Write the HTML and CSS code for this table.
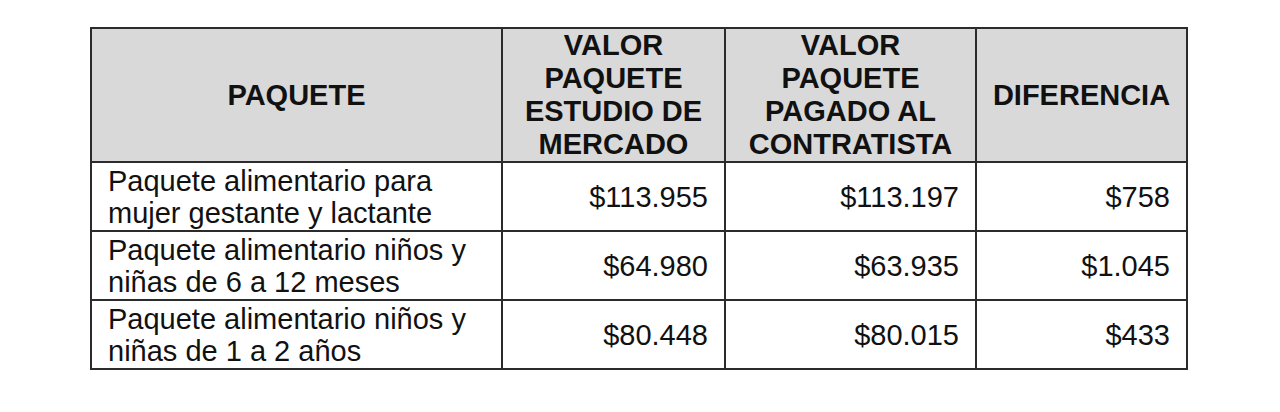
FILE: index.html
```html
<!DOCTYPE html>
<html lang="es">
<head>
<meta charset="utf-8">
<link rel="stylesheet" href="styles.css">
</head>
<body>
<div class="page">
<table class="tbl">
<colgroup>
<col class="c1"><col class="c2"><col class="c3"><col class="c4">
</colgroup>
<thead>
<tr>
<th>PAQUETE</th>
<th>VALOR<br>PAQUETE<br>ESTUDIO DE<br>MERCADO</th>
<th>VALOR<br>PAQUETE<br>PAGADO AL<br>CONTRATISTA</th>
<th>DIFERENCIA</th>
</tr>
</thead>
<tbody>
<tr>
<td class="name">Paquete alimentario para<br>mujer gestante y lactante</td>
<td class="num">$113.955</td>
<td class="num">$113.197</td>
<td class="num">$758</td>
</tr>
<tr>
<td class="name">Paquete alimentario niños y<br>niñas de 6 a 12 meses</td>
<td class="num">$64.980</td>
<td class="num">$63.935</td>
<td class="num">$1.045</td>
</tr>
<tr>
<td class="name">Paquete alimentario niños y<br>niñas de 1 a 2 años</td>
<td class="num">$80.448</td>
<td class="num">$80.015</td>
<td class="num">$433</td>
</tr>
</tbody>
</table>
</div>
</body>
</html>
```

FILE: styles.css
```css
html, body {
  margin: 0;
  padding: 0;
  background: #ffffff;
}
.page {
  padding: 27px 0 0 90px;
}
.tbl {
  border-collapse: collapse;
  table-layout: fixed;
  width: 1096px;
  font-family: "Liberation Sans", Arial, sans-serif;
  color: #111111;
}
.c1 { width: 411px; }
.c2 { width: 223px; }
.c3 { width: 251px; }
.c4 { width: 211px; }
.tbl th,
.tbl td {
  border: 2px solid #2b2b2b;
}
.tbl th {
  background: #d9d9d9;
  font-size: 29px;
  font-weight: bold;
  line-height: 33px;
  padding: 0 2px;
  text-align: center;
  vertical-align: middle;
  height: 131px;
}
.tbl td {
  font-size: 29px;
  line-height: 32px;
  padding: 2px 16px 1px 16px;
  vertical-align: middle;
  height: 64px;
}
.tbl td.name {
  text-align: left;
}
.tbl td.num {
  text-align: right;
}
```
